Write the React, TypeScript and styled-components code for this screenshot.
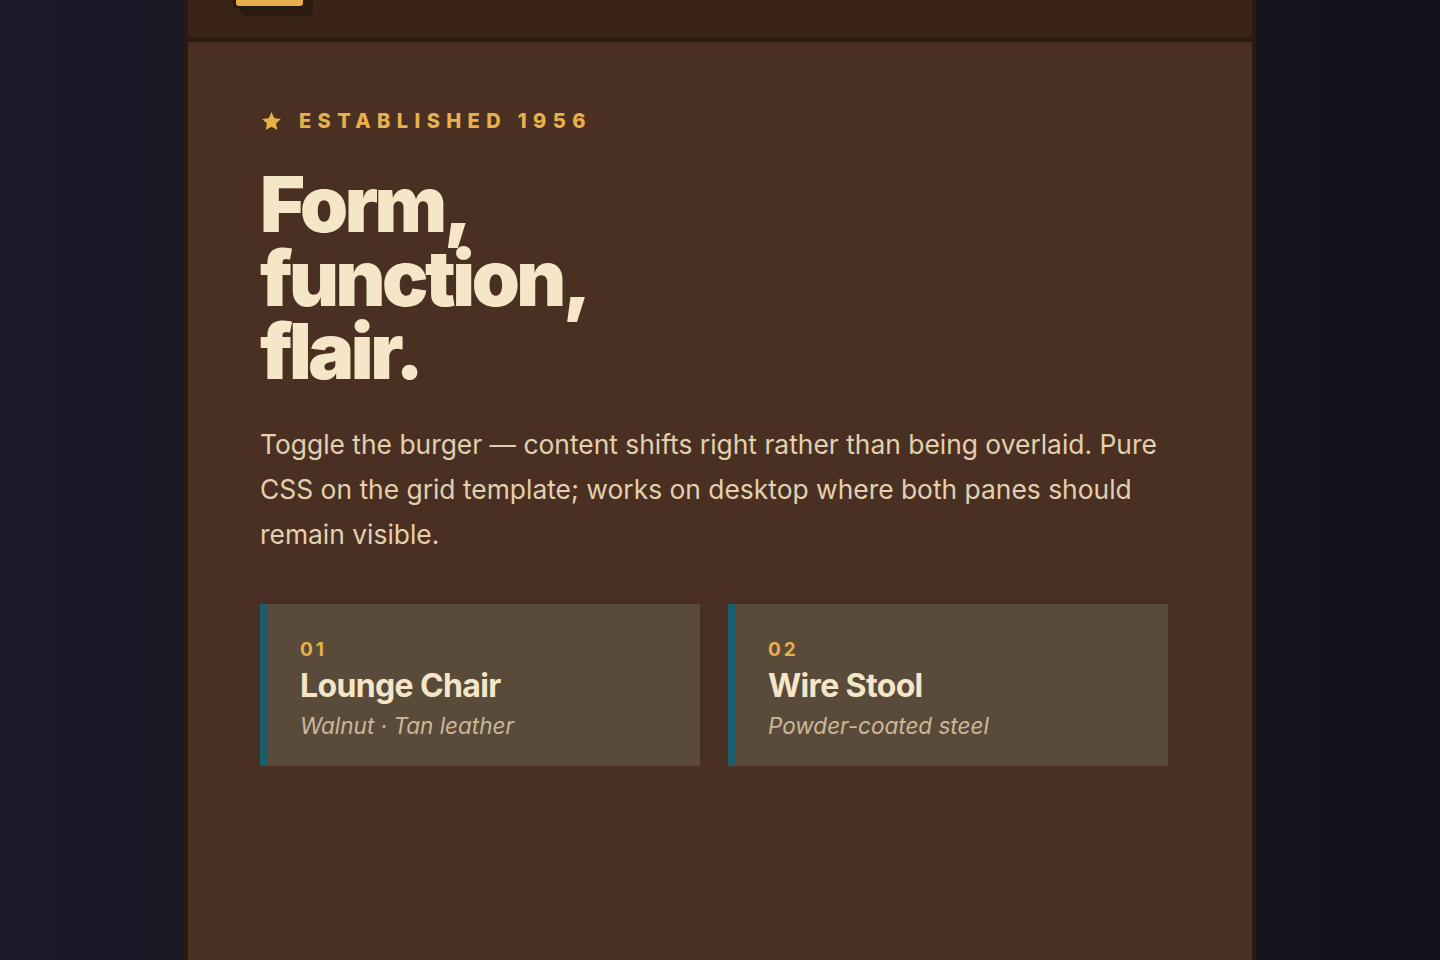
import React from 'react';
import styled, { createGlobalStyle } from 'styled-components';

const GlobalStyle = createGlobalStyle`
    * {
        box-sizing: border-box;
    }

    html, body {
        margin: 0;
        padding: 0;
    }

    body {
        background: linear-gradient(90deg, #1a1a28 0%, #161622 50%, #13131c 100%);
        font-family: Inter, "Noto Sans", sans-serif;
        min-height: 100vh;
    }
`;

const Page = styled.div`
    display: flex;
    justify-content: center;
    min-height: 100vh;
`;

const Frame = styled.div`
    width: 1072px;
    min-height: 100vh;
    display: flex;
    flex-direction: column;
    background-color: #4a3022;
    border-left: 4px solid #2a1a10;
    border-right: 4px solid #2a1a10;
`;

const TopBar = styled.header`
    height: 42px;
    display: flex;
    align-items: flex-start;
    padding-left: 45px;
    background-color: #3a2418;
    border-bottom: 4px solid #2a1a10;
`;

const Burger = styled.button`
    width: 73px;
    height: 40px;
    margin-top: -31px;
    padding: 0;
    background-color: #e8b04a;
    border: 3px solid #2a1a10;
    border-radius: 6px;
    box-shadow: 7px 7px 0 #2a1a10;
    cursor: pointer;
`;

const Main = styled.main`
    flex: 1;
    padding: 65px 72px 72px;
`;

const Inner = styled.div`
    max-width: 908px;
`;

const Eyebrow = styled.div`
    display: flex;
    align-items: center;
    gap: 16px;
    height: 28px;
    font-size: 20px;
    font-weight: 800;
    letter-spacing: 0.32em;
    text-transform: uppercase;
    color: #e8b04a;
`;

const Headline = styled.h1`
    margin: 33px 0 0;
    font-size: 77px;
    line-height: 73.5px;
    font-weight: 900;
    letter-spacing: -0.045em;
    color: #f5e6c8;
`;

const Lead = styled.p`
    margin: 33px 0 0;
    font-size: 26.4px;
    line-height: 45px;
    color: #e2d0b0;
`;

const Cards = styled.div`
    display: grid;
    grid-template-columns: 1fr 1fr;
    gap: 28px;
    margin-top: 47px;
`;

const Card = styled.article`
    background-color: #5a4a3a;
    border-left: 8px solid #1b5e6e;
    padding: 35px 32px 25px;
`;

const CardNumber = styled.div`
    font-size: 19px;
    line-height: 22px;
    font-weight: 700;
    letter-spacing: 0.15em;
    color: #e8b04a;
`;

const CardTitle = styled.h2`
    margin: 6px 0 0;
    font-size: 32px;
    line-height: 38px;
    font-weight: 700;
    letter-spacing: -0.02em;
    color: #f5e6c8;
`;

const CardMeta = styled.div`
    margin-top: 6px;
    font-size: 22.5px;
    line-height: 30px;
    font-style: italic;
    color: #cbb898;
`;

const StarIcon = () => (
    <svg width="23" height="23" viewBox="0 0 24 24" aria-hidden="true">
        <path
            fill="#e8b04a"
            d="M12 2.2l2.95 6.3 6.85.8-5.07 4.7 1.37 6.8L12 17.4l-6.1 3.4 1.37-6.8L2.2 9.3l6.85-.8z"
        />
    </svg>
);

const items = [
    { num: '01', title: 'Lounge Chair', meta: 'Walnut · Tan leather' },
    { num: '02', title: 'Wire Stool', meta: 'Powder-coated steel' },
];

const App = () => {
    return (
        <>
            <GlobalStyle />
            <Page>
                <Frame>
                    <TopBar>
                        <Burger aria-label="Toggle menu" />
                    </TopBar>
                    <Main>
                        <Inner>
                            <Eyebrow>
                                <StarIcon />
                                <span>Established 1956</span>
                            </Eyebrow>
                            <Headline>
                                Form,<br />
                                function,<br />
                                flair.
                            </Headline>
                            <Lead>
                                Toggle the burger — content shifts right rather than being overlaid. Pure CSS on the grid template; works on desktop where both panes should remain visible.
                            </Lead>
                            <Cards>
                                {items.map((item) => (
                                    <Card key={item.num}>
                                        <CardNumber>{item.num}</CardNumber>
                                        <CardTitle>{item.title}</CardTitle>
                                        <CardMeta>{item.meta}</CardMeta>
                                    </Card>
                                ))}
                            </Cards>
                        </Inner>
                    </Main>
                </Frame>
            </Page>
        </>
    );
};

export default App;
